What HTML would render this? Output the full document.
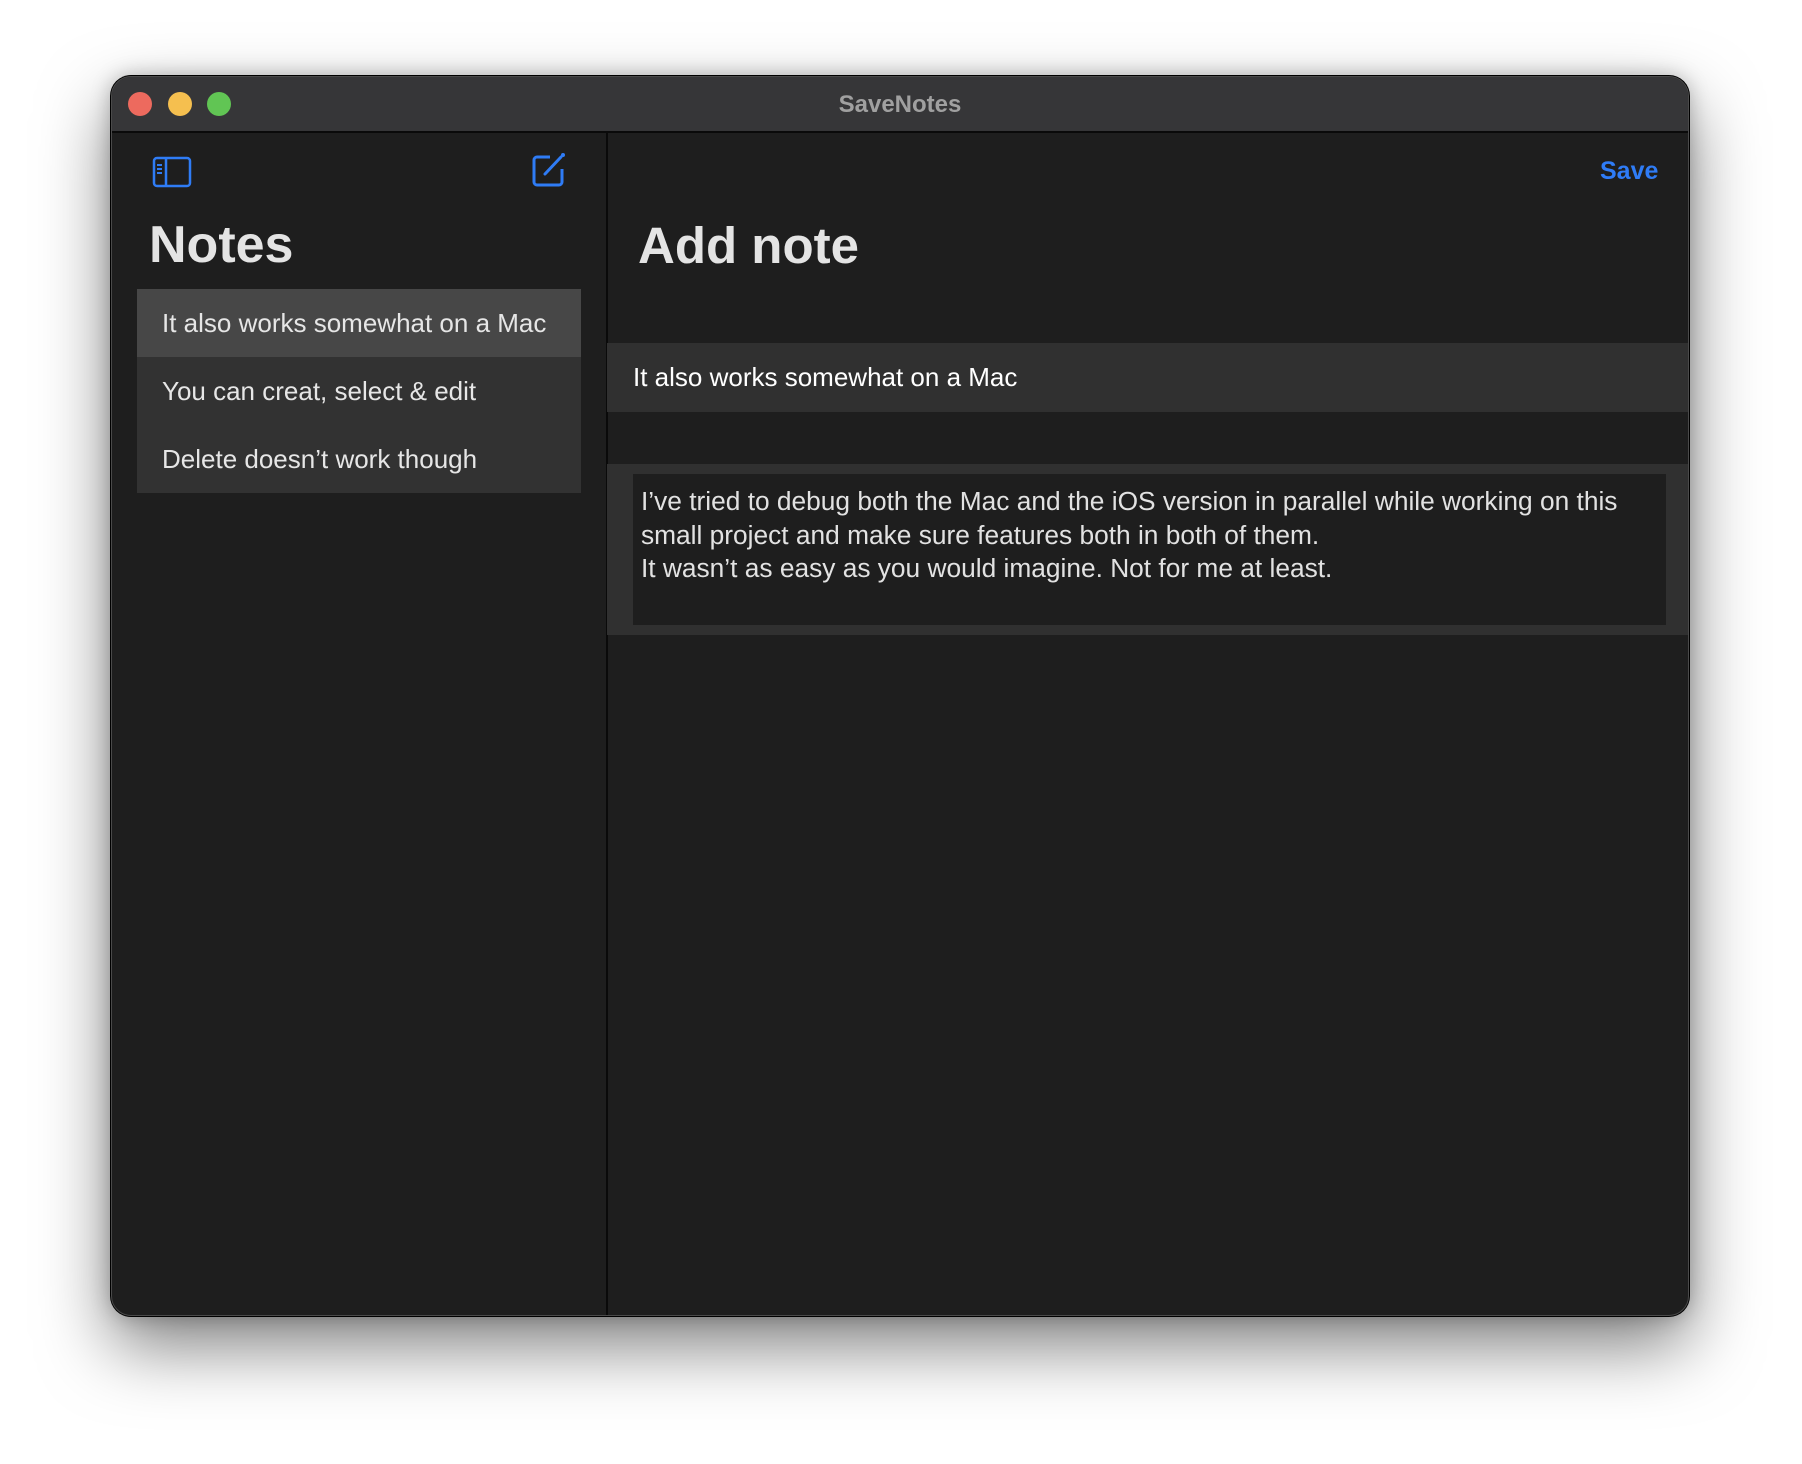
<!DOCTYPE html>
<html><head><meta charset="utf-8"><style>
*{margin:0;padding:0;box-sizing:border-box}
html,body{width:1802px;height:1464px;background:#fff;overflow:hidden;font-family:"Liberation Sans",sans-serif}
.win{position:absolute;left:111px;top:76px;width:1578px;height:1240px;border-radius:20px;background:#1e1e1e;overflow:hidden;box-shadow:0 0 0 1px #000,0 30px 70px rgba(0,0,0,.5),0 0 20px rgba(0,0,0,.25);border:1px solid #4a4a4a}
.tb{position:absolute;left:0;top:0;right:0;height:56px;background:#363638;border-bottom:2px solid #0a0a0a}
.dot{position:absolute;top:15px;width:24px;height:24px;border-radius:50%}
.ttl{position:absolute;left:0;right:0;top:14px;text-align:center;font-weight:bold;font-size:24px;color:#a0a0a0}
.div{position:absolute;left:494px;top:56px;bottom:0;width:2px;background:#0a0a0a}
.abs{position:absolute}
.row{position:absolute;left:25px;width:444px;height:68px;font-size:26px;color:#e6e6e6;padding-left:25px;line-height:68px;white-space:nowrap}
.h1{position:absolute;font-weight:bold;color:#e4e4e4;top:138px}
.t{font-size:26.3px;color:#e2e2e2;white-space:nowrap;line-height:33.5px}
</style></head><body>
<div class="win">
 <div class="tb">
  <div class="dot" style="left:16px;background:#ed6a5e"></div>
  <div class="dot" style="left:56px;background:#f5bf4f"></div>
  <div class="dot" style="left:95px;background:#61c554"></div>
  <div class="ttl">SaveNotes</div>
 </div>
 <div class="div"></div>
 <svg class="abs" style="left:40px;top:79px" width="40" height="32" viewBox="0 0 40 32"><rect x="2" y="2" width="36" height="28" rx="3" fill="none" stroke="#2f7cf6" stroke-width="2.5"/><line x1="14" y1="2" x2="14" y2="30" stroke="#2f7cf6" stroke-width="2.5"/><line x1="5" y1="9" x2="10" y2="9" stroke="#2f7cf6" stroke-width="2"/><line x1="5" y1="13" x2="10" y2="13" stroke="#2f7cf6" stroke-width="2"/><line x1="5" y1="17" x2="10" y2="17" stroke="#2f7cf6" stroke-width="2"/></svg>
 <svg class="abs" style="left:419px;top:75px" width="36" height="36" viewBox="0 0 36 36"><path d="M19 5H6a3 3 0 0 0-3 3v22a3 3 0 0 0 3 3h22a3 3 0 0 0 3-3V17" fill="none" stroke="#2f7cf6" stroke-width="3"/><path d="M14 22l16-17" stroke="#2f7cf6" stroke-width="3" stroke-linecap="round"/><circle cx="32" cy="3" r="2" fill="#2f7cf6"/></svg>
 <div class="h1" style="left:37px;font-size:52px">Notes</div>
 <div class="row" style="top:212px;background:#474747">It also works somewhat on a Mac</div>
 <div class="row" style="top:280px;background:#323232">You can creat, select &amp; edit</div>
 <div class="row" style="top:348px;background:#323232">Delete doesn’t work though</div>
 <div class="abs" style="left:1488px;top:80px;font-weight:bold;font-size:25px;color:#2f7cf6">Save</div>
 <div class="h1" style="left:526px;font-size:51px;top:139px">Add note</div>
 <div class="abs" style="left:495px;top:266px;right:0;height:69px;background:#303030"></div>
 <div class="abs t" style="left:521px;top:284px;color:#fff;font-size:26px">It also works somewhat on a Mac</div>
 <div class="abs" style="left:495px;top:387px;right:0;height:171px;background:#303030"></div>
 <div class="abs" style="left:521px;top:397px;width:1033px;height:151px;background:#1e1e1e"></div>
 <div class="abs t" style="left:529px;top:408px">I’ve tried to debug both the Mac and the iOS version in parallel while working on this<br>small project and make sure features both in both of them.<br>It wasn’t as easy as you would imagine. Not for me at least.</div>
</div>
</body></html>
